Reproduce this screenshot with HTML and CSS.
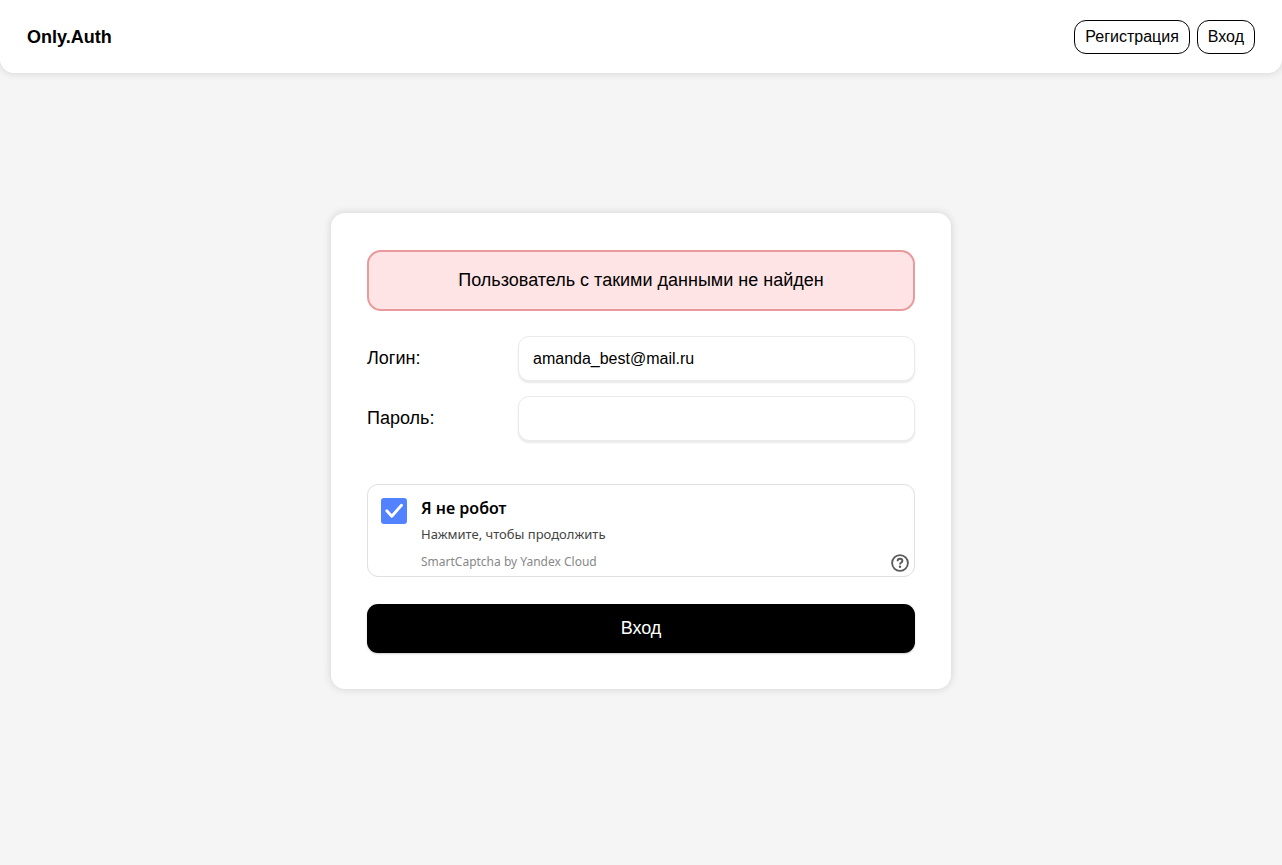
FILE: index.html
```html
<!DOCTYPE html>
<html lang="ru">
<head>
  <meta charset="utf-8">
  <meta name="viewport" content="width=device-width, initial-scale=1">
  <title>Only.Auth</title>
  <link rel="stylesheet" href="styles.css">
</head>
<body class="page">
  <header class="header">
    <a class="brand" href="#">Only.Auth</a>
    <nav class="nav">
      <a class="nav-link" href="#register">Регистрация</a>
      <a class="nav-link" href="#login">Вход</a>
    </nav>
  </header>
  <main class="main">
    <form class="card">
      <div class="alert" role="alert">Пользователь с такими данными не найден</div>
      <div class="fields">
        <div class="field">
          <label class="field-label" for="login">Логин:</label>
          <input class="field-input" id="login" type="text" value="amanda_best@mail.ru">
        </div>
        <div class="field">
          <label class="field-label" for="password">Пароль:</label>
          <input class="field-input" id="password" type="password">
        </div>
      </div>
      <div class="captcha">
        <span class="check">
          <input class="check-input" id="robot" type="checkbox" checked>
          <svg class="check-mark" viewBox="0 0 26 26" aria-hidden="true"><path d="M5.8 12.8l5 5.4L20.5 7.2" fill="none" stroke="#fff" stroke-width="2.8" stroke-linecap="round" stroke-linejoin="round"/></svg>
        </span>
        <div class="captcha-text">
          <label class="captcha-title" for="robot">Я не робот</label>
          <span class="captcha-hint">Нажмите, чтобы продолжить</span>
          <a class="captcha-brand" href="#captcha">SmartCaptcha by Yandex Cloud</a>
        </div>
        <button class="help" type="button" aria-label="Помощь">
          <svg class="help-icon" viewBox="0 0 18 18" aria-hidden="true"><circle cx="9" cy="9" r="7.9" fill="none" stroke="#5a5a5a" stroke-width="1.8"/><path d="M6.6 7.2c0-1.5 1-2.4 2.4-2.4s2.4.9 2.4 2.1c0 1.6-2.4 1.7-2.4 3.5" fill="none" stroke="#5a5a5a" stroke-width="1.9"/><circle cx="9" cy="12.8" r="1.2" fill="#5a5a5a"/></svg>
        </button>
      </div>
      <button class="submit" type="submit">Вход</button>
    </form>
  </main>
</body>
</html>
```
FILE: styles.css
```css
*, *::before, *::after { box-sizing: border-box; }

.page {
  margin: 0;
  min-height: 100vh;
  display: flex;
  flex-direction: column;
  background: #f5f5f5;
  color: #000;
  font: 18px/21px "Liberation Sans", Arial, sans-serif;
}

.header {
  display: flex;
  align-items: center;
  justify-content: space-between;
  padding: 20px 27px 19px;
  background: #fff;
  border-radius: 0 0 14px 14px;
  box-shadow: 0 0 9px rgba(0, 0, 0, 0.15);
}

.brand { color: inherit; font-weight: 700; text-decoration: none; }

.nav { display: flex; gap: 7px; }

.nav-link {
  padding: 6px 10px;
  border: 1px solid #000;
  border-radius: 12px;
  color: inherit;
  font-size: 16px;
  line-height: 20px;
  text-decoration: none;
}

.main {
  flex: 1;
  display: flex;
  align-items: center;
  justify-content: center;
  padding: 0 16px 36px;
}

.card {
  display: flex;
  flex-direction: column;
  width: 100%;
  max-width: 620px;
  padding: 37px 36px 36px;
  background: #fff;
  border-radius: 14px;
  box-shadow: 0 0 9px rgba(0, 0, 0, 0.15);
}

.alert {
  padding: 18px;
  margin-bottom: 25px;
  border: 2px solid #e89a9c;
  border-radius: 14px;
  background: #ffe4e5;
  text-align: center;
}

.fields { display: grid; gap: 15px; margin-bottom: 43px; }

.field {
  display: grid;
  grid-template-columns: 151px 1fr;
  align-items: center;
}

.field-input {
  width: 100%;
  min-width: 0;
  height: 45px;
  padding: 0 14px;
  border: 1px solid #ebebeb;
  border-radius: 11px;
  background: #fff;
  box-shadow: 0 2px 2px rgba(0, 0, 0, 0.09);
  color: inherit;
  font: inherit;
  font-size: 16px;
}

.captcha {
  display: flex;
  gap: 14px;
  padding: 11px 5px 4px 13px;
  margin-bottom: 27px;
  border: 1px solid #e0e0e0;
  border-radius: 11px;
  font-family: "Noto Sans", sans-serif;
}

.check { display: grid; width: 26px; height: 26px; margin-top: 2px; }

.check-input {
  grid-area: 1 / 1;
  appearance: none;
  width: 26px;
  height: 26px;
  margin: 0;
  border-radius: 3px;
  background: #5282ff;
}

.check-mark { grid-area: 1 / 1; pointer-events: none; }

.captcha-text { flex: 1; display: flex; flex-direction: column; }

.captcha-title { font-size: 16px; line-height: 24px; font-weight: 600; }

.captcha-hint { margin-bottom: 4px; color: #444; font-size: 13px; line-height: 28px; }

.captcha-brand { color: #888; font-size: 12px; line-height: 20px; text-decoration: none; }

.help {
  align-self: flex-end;
  display: flex;
  padding: 0;
  border: 0;
  background: none;
}

.help-icon { width: 18px; height: 18px; }

.submit {
  padding: 14px;
  border: 0;
  border-radius: 11px;
  background: #000;
  box-shadow: 0 1px 2px rgba(0, 0, 0, 0.2);
  color: #fff;
  font: inherit;
}
```
